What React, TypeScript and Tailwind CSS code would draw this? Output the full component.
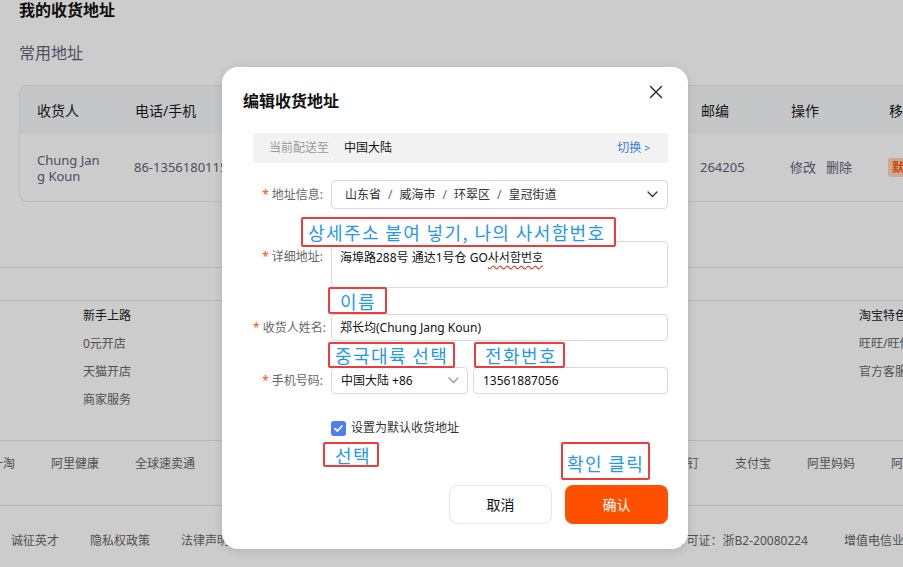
import React from "react";

const Chevron = ({ color = "#333", w = 11 }: { color?: string; w?: number }) => (
  <svg width={w} height={7} viewBox="0 0 11 7" fill="none">
    <polyline points="1,1 5.5,5.5 10,1" stroke={color} strokeWidth="1.3" strokeLinecap="round" strokeLinejoin="round" />
  </svg>
);

const Label = ({ children }: { children: React.ReactNode }) => (
  <div className="w-[70px] shrink-0 text-right text-[12px] leading-[16px] text-[#666] whitespace-nowrap">
    <span className="text-[#ff5000] mr-[3px]">*</span>
    {children}
  </div>
);

const Note = ({ className, children }: { className: string; children: React.ReactNode }) => (
  <div
    className={
      "absolute bg-white border-2 border-[#ee3b3b] rounded-[2px] flex items-center text-[#1f98ee] text-[18px] leading-[20px] tracking-[1.4px] whitespace-nowrap " +
      className
    }
    style={{ fontFamily: '"Noto Sans CJK KR", "Noto Sans", sans-serif' }}
  >
    {children}
  </div>
);

export default function App() {
  return (
    <div
      className="relative w-[903px] h-[567px] overflow-hidden bg-white"
      style={{ fontFamily: '"Noto Sans", "Noto Sans CJK SC", sans-serif' }}
    >
      {/* page */}
      <div className="flex flex-col">
        <h1 className="pl-[19px] text-[16px] font-bold leading-[20px] text-[#111]">我的收货地址</h1>
        <div className="pl-[19px] mt-[22px] text-[16px] leading-[22px] text-[#5f6577]">常用地址</div>

        <div className="ml-[19px] mt-[21px] w-[1000px] rounded-[8px] border border-[#ececec] overflow-hidden">
          <div className="flex items-center h-[48px] bg-[#f5f8f9] text-[14px] text-[#1a1a1a] pl-[17px]">
            <div className="w-[98px] shrink-0">收货人</div>
            <div className="w-[566px] shrink-0">电话/手机</div>
            <div className="w-[90px] shrink-0">邮编</div>
            <div className="w-[98px] shrink-0">操作</div>
            <div className="shrink-0">移动</div>
          </div>
          <div className="flex items-center h-[67px] text-[13px] text-[#5c6478] pl-[17px]">
            <div className="w-[98px] shrink-0 flex flex-col leading-[16px]">
              <span>Chung Jan</span>
              <span>g Koun</span>
            </div>
            <div className="w-[566px] shrink-0 -ml-[1px]">86-13561801157</div>
            <div className="w-[90px] shrink-0">264205</div>
            <div className="w-[98px] shrink-0 flex gap-[10px]">
              <span>修改</span>
              <span>删除</span>
            </div>
            <div className="shrink-0">
              <span className="px-[4px] py-[1px] rounded-[3px] bg-[#ffd2bf] text-[#ff5a00] text-[12px] font-bold">默认地址</span>
            </div>
          </div>
        </div>

        <div className="mt-[65px] border-t border-[#e3e3e3] h-[33px]" />
        <div className="border-t border-b border-[#e3e3e3] h-[141px] flex text-[12px] leading-[20px]">
          <div className="w-[859px] shrink-0 pl-[83px] pt-[5px] flex flex-col gap-[8px] text-[#666]">
            <div className="text-[#222]">新手上路</div>
            <div>0元开店</div>
            <div>天猫开店</div>
            <div>商家服务</div>
          </div>
          <div className="shrink-0 pt-[5px] flex flex-col gap-[8px] text-[#666] whitespace-nowrap">
            <div className="text-[#222]">淘宝特色</div>
            <div>旺旺/旺信</div>
            <div>官方客服</div>
          </div>
        </div>
        <div className="h-[65px] border-b border-[#e3e3e3] pt-[13px] flex text-[12px] leading-[20px] text-[#666] whitespace-nowrap -ml-[9px]">
          <div className="w-[684px] shrink-0 flex gap-[36px] overflow-hidden">
            <span>一淘</span>
            <span>阿里健康</span>
            <span>全球速卖通</span>
            <span>阿里巴巴国际站</span>
            <span>1688</span>
            <span>阿里云</span>
          </div>
          <div className="shrink-0 flex gap-[36px]">
            <span>钉钉</span>
            <span>支付宝</span>
            <span>阿里妈妈</span>
            <span>阿里巴巴</span>
          </div>
        </div>
        <div className="pt-[25px] flex text-[12px] leading-[20px] text-[#666] whitespace-nowrap">
          <div className="w-[808px] shrink-0 pl-[11px] flex gap-[31px]">
            <span>诚征英才</span>
            <span>隐私权政策</span>
            <span>法律声明</span>
            <span className="ml-auto">增值电信业务经营许可证：浙B2-20080224</span>
          </div>
          <div className="shrink-0 ml-[36px]">增值电信业务经营许可证</div>
        </div>
      </div>

      {/* dim overlay */}
      <div className="absolute inset-0 bg-black/20" />

      {/* modal */}
      <div className="absolute left-[222px] top-[67px] w-[466px] h-[482px] bg-white rounded-2xl shadow-[0_2px_10px_rgba(0,0,0,0.12)] flex flex-col">
        <div className="pt-[23px] pl-[21px] text-[16px] leading-[22px] font-bold text-[#111]">编辑收货地址</div>
        <button className="absolute right-[25px] top-[18px] w-[14px] h-[14px]">
          <svg width="14" height="14" viewBox="0 0 14 14">
            <path d="M1.5 1.5 L12.5 12.5 M12.5 1.5 L1.5 12.5" stroke="#333" strokeWidth="1.5" strokeLinecap="round" />
          </svg>
        </button>

        <div className="ml-[31px] mr-[20px] flex flex-col">
          <div className="mt-[21px] h-[30px] bg-[#f2f2f2] flex items-center pl-[16px] pr-[18px] text-[12px]">
            <span className="text-[#999]">当前配送至</span>
            <span className="ml-[15px] text-[#111]">中国大陆</span>
            <span className="ml-auto text-[#3a7bd5]">
              切换 <span className="text-[10px]">&gt;</span>
            </span>
          </div>

          <div className="mt-[17px] flex items-center gap-[8px]">
            <Label>地址信息:</Label>
            <div className="flex-1 h-[29px] border border-[#d9d9d9] rounded-[4px] flex items-center pl-[13px] pr-[9px] text-[12px] text-[#333]">
              <span>山东省</span>
              <span className="mx-[7px] text-[#666]">/</span>
              <span>威海市</span>
              <span className="mx-[7px] text-[#666]">/</span>
              <span>环翠区</span>
              <span className="mx-[7px] text-[#666]">/</span>
              <span>皇冠街道</span>
              <span className="ml-auto">
                <Chevron />
              </span>
            </div>
          </div>

          <div className="mt-[32px] flex items-start gap-[8px]">
            <div className="pt-[8px]">
              <Label>详细地址:</Label>
            </div>
            <div className="flex-1 h-[47px] border border-[#d9d9d9] rounded-[4px] pl-[8px] pt-[8px] text-[12px] leading-[16px] text-[#111]">
              海埠路288号 通达1号仓 GO
              <span className="underline decoration-wavy decoration-[#e53935] underline-offset-[3px]">사서함번호</span>
            </div>
          </div>

          <div className="mt-[26px] flex items-center gap-[8px]">
            <Label>收货人姓名:</Label>
            <div className="flex-1 h-[27px] border border-[#d9d9d9] rounded-[4px] flex items-center pl-[8px] text-[12px] text-[#111]">
              郑长均(Chung Jang Koun)
            </div>
          </div>

          <div className="mt-[26px] flex items-center gap-[8px]">
            <Label>手机号码:</Label>
            <div className="flex-1 flex gap-[5px]">
              <div className="w-[137px] h-[27px] border border-[#d9d9d9] rounded-[4px] flex items-center pl-[9px] pr-[8px] text-[12px] text-[#111]">
                中国大陆 +86
                <span className="ml-auto">
                  <Chevron color="#999" />
                </span>
              </div>
              <div className="flex-1 h-[27px] border border-[#d9d9d9] rounded-[4px] flex items-center pl-[9px] text-[12px] text-[#111]">
                13561887056
              </div>
            </div>
          </div>

          <div className="mt-[26px] pl-[78px] flex items-center gap-[5px]">
            <div className="w-[15px] h-[15px] rounded-[3px] bg-[#4d7ff2] flex items-center justify-center">
              <svg width="11" height="11" viewBox="0 0 11 11">
                <polyline points="2,5.6 4.5,8 9,3" fill="none" stroke="#fff" strokeWidth="1.8" strokeLinecap="round" strokeLinejoin="round" />
              </svg>
            </div>
            <span className="text-[12px] leading-[16px] text-[#333]">设置为默认收货地址</span>
          </div>

          <div className="mt-[49px] flex justify-end gap-[13px]">
            <button className="w-[103px] h-[39px] rounded-[8px] border border-[#e6e6e6] bg-white text-[14px] text-[#111]">取消</button>
            <button className="w-[103px] h-[39px] rounded-[8px] bg-[#ff5000] text-[14px] text-white">确认</button>
          </div>
        </div>

        <Note className="left-[79px] top-[150px] w-[315px] h-[30px] pl-[5px]">상세주소 붙여 넣기, 나의 사서함번호</Note>
        <Note className="left-[106px] top-[220px] w-[59px] h-[27px] pl-[10px]">이름</Note>
        <Note className="left-[106px] top-[275px] w-[127px] h-[26px] pl-[5px]">중국대륙 선택</Note>
        <Note className="left-[252px] top-[275px] w-[91px] h-[26px] pl-[9px]">전화번호</Note>
        <Note className="left-[101px] top-[375px] w-[56px] h-[25px] pl-[10px]">선택</Note>
        <Note className="left-[339px] top-[375px] w-[89px] h-[38px] pl-[4px] pt-[4px]">확인 클릭</Note>
      </div>
    </div>
  );
}
